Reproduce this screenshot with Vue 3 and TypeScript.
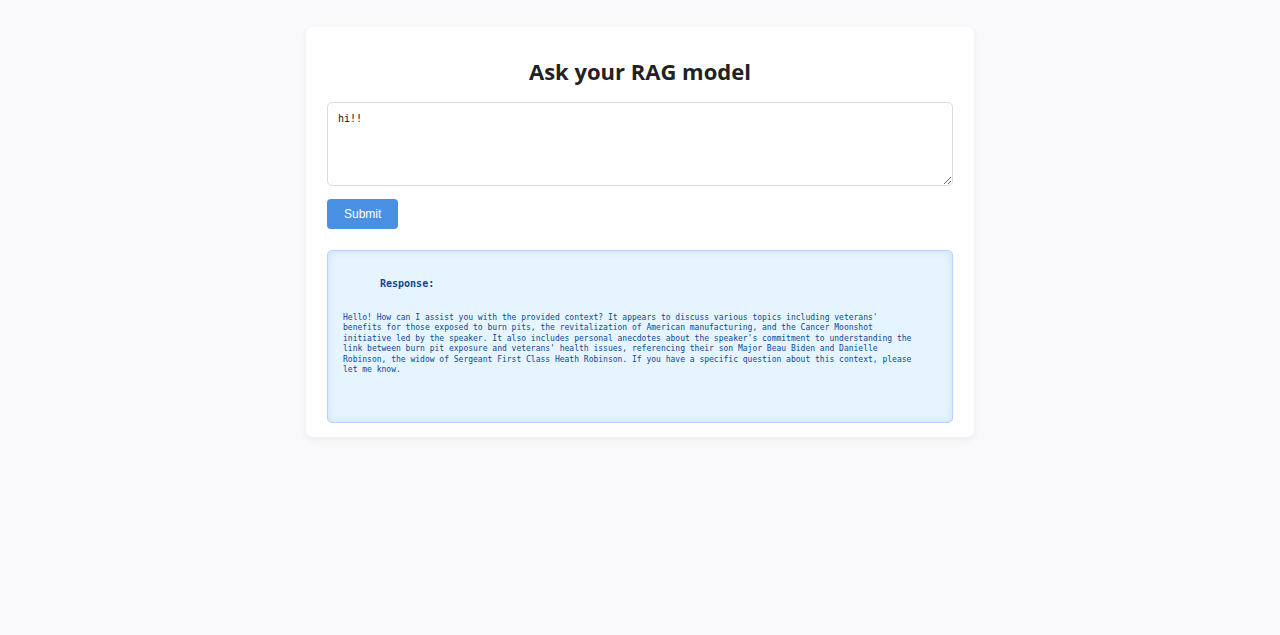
<script setup lang="ts">
import { ref } from 'vue'

const question = ref('hi!!')
const answer = ref(
  "Hello! How can I assist you with the provided context? It appears to discuss various topics including veterans' benefits for those exposed to burn pits, the revitalization of American manufacturing, and the Cancer Moonshot initiative led by the speaker. It also includes personal anecdotes about the speaker's commitment to understanding the link between burn pit exposure and veterans' health issues, referencing their son Major Beau Biden and Danielle Robinson, the widow of Sergeant First Class Heath Robinson. If you have a specific question about this context, please let me know."
)
</script>

<template>
  <main class="card">
    <h1 class="title">Ask your RAG model</h1>
    <form class="form" @submit.prevent>
      <textarea v-model="question" class="question" aria-label="Your question"></textarea>
      <button type="submit" class="submit">Submit</button>
    </form>
    <section class="response">
      <h2 class="response-title">Response:</h2>
      <p class="answer">{{ answer }}</p>
    </section>
  </main>
</template>

<style>
body {
  background: #f9f9fc;
}
</style>

<style scoped>
.card {
  box-sizing: border-box;
  max-width: 668px;
  margin: 27px auto;
  padding: 28px 21px 14px;
  border-radius: 7px;
  background: #fff;
  box-shadow: 0 3px 10px rgba(0, 0, 0, 0.05);
  font-family: "Open Sans", "Noto Sans", sans-serif;
}

.title {
  margin: 0 0 14px;
  color: #222;
  font-size: 22px;
  line-height: 33px;
  font-weight: 700;
  text-align: center;
}

.form {
  display: flex;
  flex-direction: column;
  align-items: flex-start;
  gap: 13px;
}

.question {
  box-sizing: border-box;
  display: block;
  width: 100%;
  height: 84px;
  padding: 9px 10px;
  border: 1px solid #d9dde2;
  border-radius: 5px;
  outline: none;
  background: #fff;
  color: #111;
  font-family: "DejaVu Sans Mono", monospace;
  font-size: 10px;
  line-height: 13px;
  resize: vertical;
}

.submit {
  padding: 8px 17px;
  border: 0;
  border-radius: 4px;
  background: #4a90e2;
  color: #fff;
  font-family: "Liberation Sans", Arial, sans-serif;
  font-size: 12px;
  line-height: 14px;
  cursor: pointer;
}

.response {
  box-sizing: border-box;
  min-height: 173px;
  margin-top: 21px;
  padding: 26px 15px 47px;
  border: 1px solid #b3d4fc;
  border-radius: 5px;
  background: #e6f4ff;
  box-shadow: inset 0 0 7px rgba(74, 144, 226, 0.2);
  color: #0b4a8f;
  font-family: "DejaVu Sans Mono", monospace;
}

.response-title {
  margin: 0 0 22px;
  padding-left: 37px;
  font-size: 10px;
  line-height: 14px;
  font-weight: 700;
}

.answer {
  max-width: 119ch;
  margin: 0;
  font-size: 8px;
  line-height: 1.3;
}
</style>
